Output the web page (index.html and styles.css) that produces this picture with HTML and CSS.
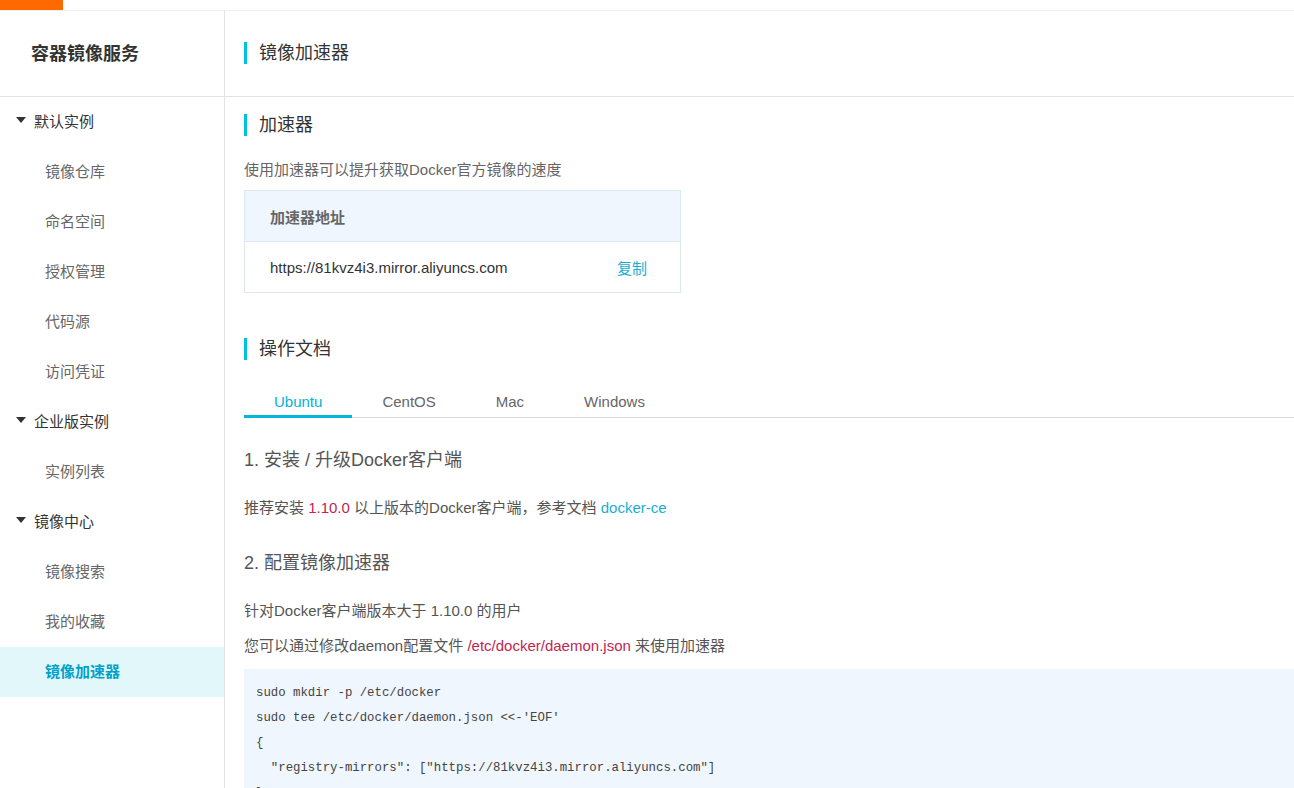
FILE: index.html
```html
<!DOCTYPE html>
<html lang="zh-CN">
<head>
<meta charset="utf-8">
<title>镜像加速器</title>
<link rel="stylesheet" href="styles.css">
</head>
<body>
<div class="topbar"><div class="brand"></div></div>
<div class="layout">
  <aside class="sidebar">
    <div class="side-title">容器镜像服务</div>
    <ul class="nav">
      <li class="group"><span class="caret"></span>默认实例</li>
      <li class="item">镜像仓库</li>
      <li class="item">命名空间</li>
      <li class="item">授权管理</li>
      <li class="item">代码源</li>
      <li class="item">访问凭证</li>
      <li class="group"><span class="caret"></span>企业版实例</li>
      <li class="item">实例列表</li>
      <li class="group"><span class="caret"></span>镜像中心</li>
      <li class="item">镜像搜索</li>
      <li class="item">我的收藏</li>
      <li class="item active">镜像加速器</li>
    </ul>
  </aside>
  <main class="main">
    <div class="page-head"><h1 class="bar-title">镜像加速器</h1></div>
    <div class="content">
      <h2 class="bar-title sec-first">加速器</h2>
      <p class="desc">使用加速器可以提升获取Docker官方镜像的速度</p>
      <div class="addr-table">
        <div class="addr-head">加速器地址</div>
        <div class="addr-row">
          <span>https://81kvz4i3.mirror.aliyuncs.com</span>
          <a class="link copy">复制</a>
        </div>
      </div>

      <h2 class="bar-title sec-docs">操作文档</h2>
      <div class="tabs">
        <span class="tab active">Ubuntu</span>
        <span class="tab">CentOS</span>
        <span class="tab">Mac</span>
        <span class="tab">Windows</span>
      </div>

      <h3 class="step step-1">1. 安装 / 升级Docker客户端</h3>
      <p class="para p-1">推荐安装 <span class="code-red">1.10.0</span> 以上版本的Docker客户端，参考文档 <a class="link">docker-ce</a></p>
      <h3 class="step step-2">2. 配置镜像加速器</h3>
      <p class="para p-2">针对Docker客户端版本大于 1.10.0 的用户</p>
      <p class="para p-3">您可以通过修改daemon配置文件 <span class="code-red">/etc/docker/daemon.json</span> 来使用加速器</p>
      <pre class="code">sudo mkdir -p /etc/docker
sudo tee /etc/docker/daemon.json &lt;&lt;-'EOF'
{
  "registry-mirrors": ["https://81kvz4i3.mirror.aliyuncs.com"]
}
EOF
sudo systemctl daemon-reload
sudo systemctl restart docker</pre>
    </div>
  </main>
</div>
</body>
</html>
```

FILE: styles.css
```css
* { box-sizing: border-box; }
html, body { margin: 0; padding: 0; height: 100%; overflow: hidden; }
body {
  font-family: "Liberation Sans", "Noto Sans CJK SC", sans-serif;
  font-size: 15px;
  color: #333;
  background: #fff;
}
.topbar {
  height: 11px;
  border-bottom: 1px solid #f0f0f0;
  background: #fff;
}
.brand { width: 63px; height: 10px; background: #ff6a00; }

.layout { display: flex; height: calc(100% - 11px); }

.sidebar {
  width: 225px;
  flex: none;
  border-right: 1px solid #e3e3e3;
}
.side-title {
  height: 86px;
  border-bottom: 1px solid #e3e3e3;
  display: flex;
  align-items: center;
  padding-left: 31px;
  padding-bottom: 4px;
  font-size: 18px;
  font-weight: bold;
  color: #333;
}
.nav { list-style: none; margin: 0; padding: 0; }
.nav li {
  height: 50px;
  display: flex;
  align-items: center;
  font-size: 15px;
  padding-bottom: 4px;
}
.nav .group { padding-left: 16px; color: #333; }
.caret {
  width: 0; height: 0;
  border-left: 5px solid transparent;
  border-right: 5px solid transparent;
  border-top: 6px solid #333;
  margin-right: 8px;
}
.nav .item { padding-left: 45px; color: #666; }
.nav .item.active { background: #e2f7fa; color: #00a2ca; font-weight: bold; }

.main { flex: 1; min-width: 0; }
.page-head {
  height: 86px;
  border-bottom: 1px solid #e3e3e3;
  display: flex;
  align-items: center;
  padding-left: 19px;
  padding-bottom: 1px;
}
.bar-title {
  margin: 0;
  font-size: 18px;
  font-weight: normal;
  color: #333;
  line-height: 22px;
  border-left: 3px solid #00c1de;
  padding-left: 12px;
}
.content { padding-left: 19px; }
.sec-first { margin-top: 17px; }
.desc { margin: 23px 0 0; line-height: 22px; color: #666; }

.addr-table {
  margin-top: 9px;
  width: 437px;
  border: 1px solid #dce8f4;
}
.addr-head {
  height: 51px;
  background: #eff6fd;
  border-bottom: 1px solid #dce8f4;
  display: flex;
  align-items: center;
  padding-left: 25px;
  font-weight: bold;
  color: #666;
}
.addr-row {
  height: 50px;
  display: flex;
  align-items: center;
  justify-content: space-between;
  padding: 0 33px 0 25px;
  color: #333;
}
.link { color: #17b0d3; text-decoration: none; }

.sec-docs { margin-top: 45px; }
.tabs {
  margin-top: 27px;
  display: flex;
  border-bottom: 1px solid #d9d9d9;
}
.tab {
  padding: 4px 30px 2px;
  line-height: 22px;
  color: #666;
  border-bottom: 3px solid transparent;
  margin-bottom: -1px;
}
.tab.active { color: #00b3d6; border-bottom-color: #00b6d9; }

.step {
  margin: 0;
  font-size: 18px;
  font-weight: normal;
  line-height: 26px;
  color: #555;
}
.step-1 { margin-top: 29px; }
.step-2 { margin-top: 31px; }
.para { margin: 0; line-height: 22px; color: #555; }
.p-1 { margin-top: 24px; }
.p-2 { margin-top: 24px; }
.p-3 { margin-top: 13px; }
.code-red { color: #c0264f; }

.code {
  margin: 12px 0 0;
  background: #f0f6fd;
  padding: 12px 12px;
  font-family: "Liberation Mono", monospace;
  font-size: 12.35px;
  line-height: 25px;
  color: #444;
}
```
